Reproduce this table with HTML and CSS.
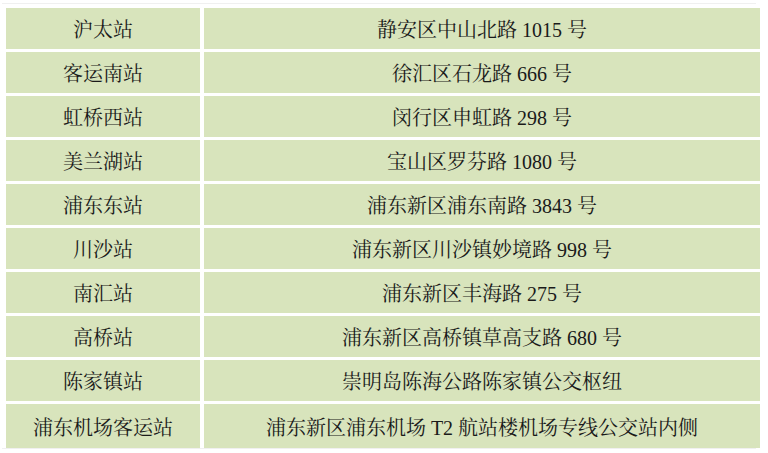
FILE: index.html
```html
<!DOCTYPE html>
<html lang="zh-CN">
<head>
<meta charset="utf-8">
<title>站点地址</title>
<link rel="stylesheet" href="styles.css">
</head>
<body>
<div class="table">
  <div class="cell">沪太站</div><div class="cell">静安区中山北路 1015 号</div>
  <div class="cell">客运南站</div><div class="cell">徐汇区石龙路 666 号</div>
  <div class="cell">虹桥西站</div><div class="cell">闵行区申虹路 298 号</div>
  <div class="cell">美兰湖站</div><div class="cell">宝山区罗芬路 1080 号</div>
  <div class="cell">浦东东站</div><div class="cell">浦东新区浦东南路 3843 号</div>
  <div class="cell">川沙站</div><div class="cell">浦东新区川沙镇妙境路 998 号</div>
  <div class="cell">南汇站</div><div class="cell">浦东新区丰海路 275 号</div>
  <div class="cell">高桥站</div><div class="cell">浦东新区高桥镇草高支路 680 号</div>
  <div class="cell">陈家镇站</div><div class="cell">崇明岛陈海公路陈家镇公交枢纽</div>
  <div class="cell last">浦东机场客运站</div><div class="cell last">浦东新区浦东机场 T2 航站楼机场专线公交站内侧</div>
</div>
</body>
</html>
```
FILE: styles.css
```css
html, body {
  margin: 0;
  padding: 0;
  background: #ffffff;
}
body {
  font-family: "Liberation Serif", "Noto Serif CJK SC", "Noto Sans CJK SC", serif;
  font-size: 20px;
  color: #1a1a1a;
}
.table {
  display: grid;
  grid-template-columns: 194px 556px;
  grid-auto-rows: 41px;
  column-gap: 4px;
  row-gap: 3px;
  margin: 3px 0 0 2px;
  padding: 4px 4px 3px 4px;
  width: 754px;
  border-top: 1px solid #f0f0f0;
  border-bottom: 1px solid #f0f0f0;
  box-sizing: border-box;
}
.cell {
  background: #d8e4bc;
  display: flex;
  align-items: center;
  justify-content: center;
  white-space: nowrap;
}
.cell.last {
  height: 44px;
}
```
